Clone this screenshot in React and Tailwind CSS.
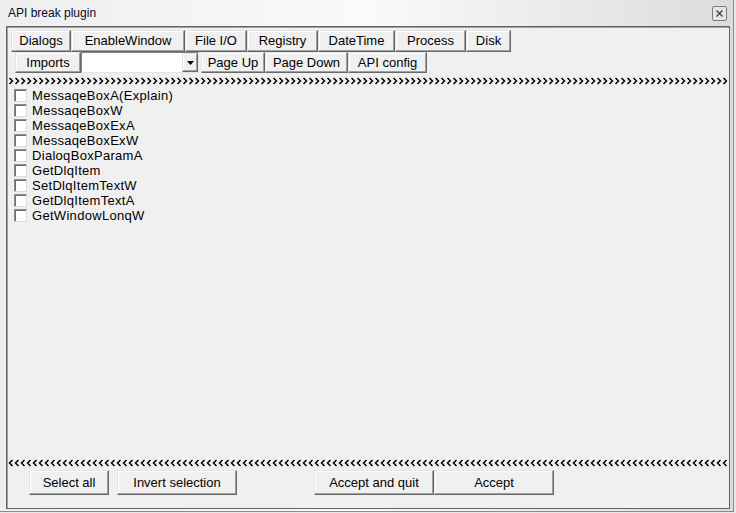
import React from 'react';

const tabs = ['Dialogs', 'EnableWindow', 'File I/O', 'Registry', 'DateTime', 'Process', 'Disk'];
const tabWidths = [60, 114, 62, 71, 77, 71, 45];

const apis = [
  'MessaqeBoxA(Explain)',
  'MessaqeBoxW',
  'MessaqeBoxExA',
  'MessaqeBoxExW',
  'DialoqBoxParamA',
  'GetDlqItem',
  'SetDlqItemTextW',
  'GetDlqItemTextA',
  'GetWindowLonqW',
];

const btn =
  'flex items-center justify-center bg-[#f0f0f0] border border-t-[#e3e3e3] border-l-[#e3e3e3] border-r-[#696969] border-b-[#696969] shadow-[inset_-1px_-1px_0_#a0a0a0,inset_1px_1px_0_#ffffff] text-black';

// row of small chevrons drawn as a repeating svg pattern
const Chevrons = ({ dir }) => {
  const id = dir === 'right' ? 'chev-r' : 'chev-l';
  const d = dir === 'right' ? 'M1.5 1 L4.5 4 L1.5 7' : 'M4.5 1 L1.5 4 L4.5 7';
  return (
    <svg className="block w-full h-[8px]">
      <defs>
        <pattern id={id} width="6" height="8" patternUnits="userSpaceOnUse">
          <path d={d} stroke="#000" strokeWidth="1.5" fill="none" />
        </pattern>
      </defs>
      <rect width="100%" height="8" fill={`url(#${id})`} />
    </svg>
  );
};

export default function App() {
  return (
    <div
      className="w-[736px] h-[513px] bg-[#e8e8e8] relative overflow-hidden"
      style={{ fontFamily: '"Liberation Sans", Arial, sans-serif' }}
    >
      <div className="absolute left-0 top-0 w-[734px] h-[512px] bg-gradient-to-r from-[#eeeeee] via-[#fafafa] to-[#dcdcdc] border-r border-b border-[#8a8a8a] flex flex-col">
        {/* title bar */}
        <div className="h-[26px] flex items-center justify-between pl-[8px] pr-[6px]">
          <span className="text-[12px] text-[#0a0a1e]">API break plugin</span>
          <div className="w-[15px] h-[15px] mt-[1px] border border-[#7a7a7a] rounded-[2px] bg-[#e6e6e6] flex items-center justify-center">
            <svg width="7" height="7" viewBox="0 0 7 7">
              <path d="M0.5 0.5 L6.5 6.5 M6.5 0.5 L0.5 6.5" stroke="#444" strokeWidth="1.4" />
            </svg>
          </div>
        </div>
        {/* inner panel */}
        <div className="ml-[6px] mr-[3px] mb-[2px] flex-1 bg-[#f0f0f0] border border-[#646464] shadow-[inset_1px_1px_0_#a0a0a0] flex flex-col px-[1px]">
          <div className="flex pl-[3px] pt-[3px] h-[25px]">
            {tabs.map((t, i) => (
              <div key={t} className={`${btn} h-[22px] text-[13px]`} style={{ width: tabWidths[i] }}>
                {t}
              </div>
            ))}
          </div>
          <div className="flex pl-[7px] h-[21px] items-start">
            <div className={`${btn} w-[66px] h-[21px] text-[13px]`}>Imports</div>
            <div className="w-[118px] h-[21px] bg-white border border-[#828282] border-r-[#e3e3e3] border-b-[#e3e3e3] flex justify-end items-stretch">
              <div className={`${btn} w-[16px]`}>
                <svg width="7" height="4" viewBox="0 0 7 4">
                  <path d="M0 0 H7 L3.5 4 Z" fill="#000" />
                </svg>
              </div>
            </div>
            <div className={`${btn} ml-[2px] w-[64px] h-[21px] text-[13px]`}>Page Up</div>
            <div className={`${btn} w-[83px] h-[21px] text-[13px]`}>Page Down</div>
            <div className={`${btn} w-[79px] h-[21px] text-[13px]`}>API config</div>
          </div>
          <div className="mt-[4px] pr-[1px]">
            <Chevrons dir="right" />
          </div>
          <div className="flex flex-col pl-[6px] pt-[3px]">
            {apis.map((a) => (
              <label key={a} className="flex items-center h-[15px] text-[13px] text-black">
                <span className="w-[13px] h-[13px] bg-white border border-[#8e8f8f] border-r-[#dcdcdc] border-b-[#dcdcdc] shadow-[inset_1px_1px_0_#6e6e6e]" />
                <span className="ml-[5px] leading-[15px] tracking-[0.3px]">{a}</span>
              </label>
            ))}
          </div>
          <div className="flex-1" />
          <div className="pr-[1px]">
            <Chevrons dir="left" />
          </div>
          <div className="flex h-[25px] mt-[3px] mb-[13px] items-start">
            <div className={`${btn} ml-[21px] w-[80px] h-[25px] text-[13px]`}>Select all</div>
            <div className={`${btn} ml-[8px] w-[120px] h-[25px] text-[13px]`}>Invert selection</div>
            <div className={`${btn} ml-[77px] w-[120px] h-[25px] text-[13px]`}>Accept and quit</div>
            <div className={`${btn} w-[120px] h-[25px] text-[13px]`}>Accept</div>
          </div>
        </div>
      </div>
    </div>
  );
}
